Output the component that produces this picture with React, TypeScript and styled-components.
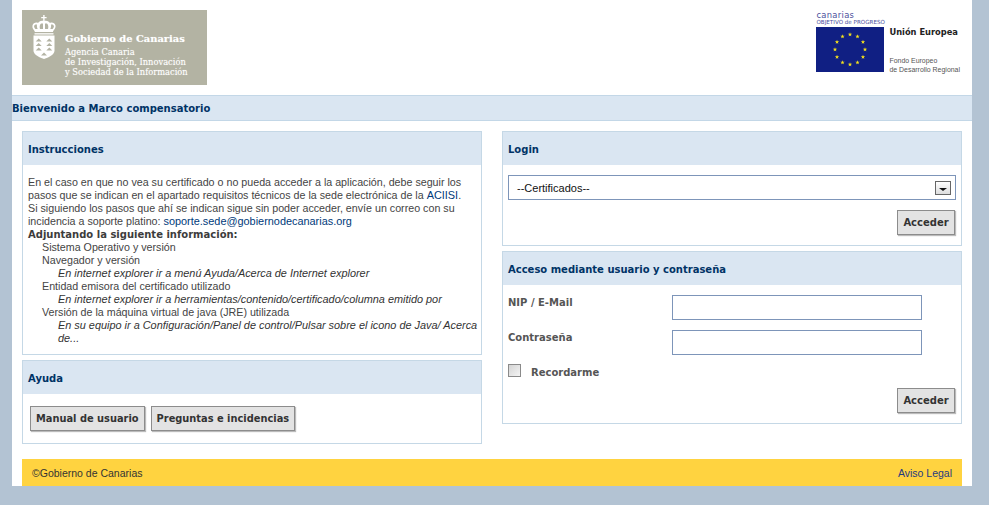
import React from "react";
import styled, { createGlobalStyle } from "styled-components";

const Global = createGlobalStyle`
  html, body { margin: 0; padding: 0; background: #b3c3d3; }
  body { font-family: "Liberation Sans", "DejaVu Sans", sans-serif; font-size: 12px; color: #444; }
`;
const bold = `"DejaVu Sans", "Noto Sans", sans-serif`;
const body = `"Liberation Sans", "DejaVu Sans", sans-serif`;

const Page = styled.div`
  width: 960px; margin-left: 12px; background: #fff; height: 486px;
  display: flex; flex-direction: column; margin-bottom: 19px;
`;
const Header = styled.header`
  height: 95px; display: flex; justify-content: space-between; align-items: flex-start;
  padding: 0 12px 0 10px; box-sizing: border-box;
`;
const LogoBox = styled.div`
  margin-top: 10px; width: 185px; height: 75px; background: #b3b3a3; color: #fff;
  display: flex; gap: 9px; padding: 5px 0 0 10px; box-sizing: border-box;
`;
const LogoText = styled.div`
  font-family: "DejaVu Serif", serif; font-size: 8.3px; line-height: 10px; padding-top: 16px; white-space: nowrap;
  text-shadow: 0 0 1px rgba(255, 255, 255, 0.45);
`;
const LogoTitle = styled.div`font-size: 9.9px; font-weight: bold; line-height: 15px; margin-bottom: 1px;`;
const EuBox = styled.div`
  margin-top: 11px; display: flex; gap: 5px; align-items: flex-start;
`;
const EuLeft = styled.div`width: 68px; display: flex; flex-direction: column;`;
const Canarias = styled.div`font-family: "DejaVu Sans", sans-serif; font-size: 8.4px; line-height: 8px; color: #4a4f9c; letter-spacing: 0.3px;`;
const Objetivo = styled.div`font-family: "DejaVu Sans", sans-serif; font-size: 5.6px; line-height: 7px; color: #4a4f9c; white-space: nowrap; height: 8px;`;
const EuRight = styled.div`padding-top: 16px; white-space: nowrap; color: #333; font-family: "Liberation Sans", sans-serif;`;
const EuTitle = styled.div`font-family: "DejaVu Sans", sans-serif; font-weight: bold; font-size: 8.3px; line-height: 11px; color: #222; margin-bottom: 18px;`;
const EuSub = styled.div`font-size: 6.95px; line-height: 9px; color: #555;`;

const WelcomeBar = styled.div`
  height: 26px; box-sizing: border-box; background: #dae6f2; padding-top: 1px;
  border-top: 1px solid #c3d7e7; border-bottom: 1px solid #c3d7e7;
  font-family: ${bold}; font-weight: bold; font-size: 10px; line-height: 24px; color: #003366;
`;
const Columns = styled.div`
  display: grid; grid-template-columns: 460px 460px; column-gap: 20px; padding: 10px 10px 0;
  height: 338px; box-sizing: border-box;
`;
const Column = styled.div`display: flex; flex-direction: column; gap: 5px;`;
const Panel = styled.section<{ $h: number }>`
  height: ${(p) => p.$h}px; box-sizing: border-box; border: 1px solid #c5d8e6; background: #fff;
`;
const PanelHead = styled.h2`
  margin: 0; height: 33px; box-sizing: border-box; background: #dae6f2; padding: 1px 0 0 5px;
  font-family: ${bold}; font-weight: bold; font-size: 10px; line-height: 33px; color: #003366;
`;
const Instr = styled.div`
  padding: 11px 1px 0 5px; font-family: ${body}; font-size: 10.7px; line-height: 13px; color: #444;
`;
const Mail = styled.a`color: #003a7a; text-decoration: none; font-size: 10.9px;`;
const Strong = styled.div`font-family: ${bold}; font-weight: bold; font-size: 10px; color: #3c3c3c;`;
const Item = styled.div`padding-left: 14px;`;
const Hint = styled.div`padding-left: 30px; font-style: italic; font-size: 10.9px; color: #333;`;

const Btn = styled.button`
  height: 25px; box-sizing: border-box; padding: 0 5px; background: #e3e3e3;
  border: 1px solid #8c8c8c; box-shadow: 1px 1px 1px #bbb; border-radius: 0;
  font-family: ${bold}; font-weight: bold; font-size: 9.85px; color: #333; white-space: nowrap;
`;
const AccessBtn = styled(Btn)`width: 58px; font-size: 10px; padding: 0;`;
const BtnRow = styled.div`display: flex; gap: 6px; padding: 12px 0 0 7px;`;
const EndRow = styled.div<{ $top: number }>`display: flex; justify-content: flex-end; padding: ${(p) => p.$top}px 6px 0 0;`;

const Select = styled.div`
  height: 25px; box-sizing: border-box; margin: 10px 5px 0; border: 1px solid #7d95b9;
  display: flex; align-items: center; justify-content: space-between; padding: 0 4px 0 8px;
  font-family: ${body}; font-size: 11px; color: #111;
`;
const Arrow = styled.span`
  width: 16px; height: 14px; box-sizing: border-box; border: 1px solid #666; background: linear-gradient(#fff, #ddd);
  display: flex; align-items: center; justify-content: center; padding-top: 4px;
`;
const Tri = styled.i`width: 0; height: 0; border: 4px solid transparent; border-top: 3px solid #111; border-bottom: 0;`;

const FormGrid = styled.div`
  display: grid; grid-template-columns: 164px 250px; row-gap: 10px; padding: 10px 0 0 5px;
`;
const Label = styled.label`
  font-family: ${bold}; font-weight: bold; font-size: 10px; line-height: 13px; color: #555; padding-top: 1px;
`;
const CheckLabel = styled(Label)`padding-top: 2px;`;
const Field = styled.input`
  width: 250px; height: 25px; box-sizing: border-box; border: 1px solid #7d95b9; background: #fff; padding: 0; margin: 0; outline: 0;
`;
const CheckRow = styled.div`display: flex; align-items: flex-start; gap: 10px; padding: 9px 0 0 5px;`;
const Check = styled.span`
  width: 13px; height: 13px; box-sizing: border-box; border: 1px solid #8a8a8a;
  background: linear-gradient(135deg, #d4d4d4, #f4f4f4);
`;

const Footer = styled.footer`
  margin: 0 10px; height: 27px; background: #ffd340; display: flex; justify-content: space-between; align-items: center;
  padding: 0 10px; font-family: ${body}; font-size: 10.5px; color: #333;
`;
const Legal = styled.a`color: #1f3a80; text-decoration: none;`;

const Shield = () => (
  <svg width="24" height="44" viewBox="0 0 24 44" fill="#fff">
    <path d="M11.2 0h1.4v2h2v1.3h-2V6h-1.4V3.3h-2V2h2z" />
    <path d="M12 6c3-1 5 .5 6 2 2-1 5 0 5.5 2.6.4 2.3-1 4-2.3 5.400l-.2 1H2.800l-.2-1C1.300 14.500 0 13 .5 10.600 1 8 4 7 6 8c1-1.500 3-3 6-2z" />
    <path d="M5 9.500c-1.600-.3-2.700.3-2.900 1.600-.1 1 .4 2 1.300 3h2.300C5 12.500 4.700 11 5 9.500zM19 9.500c1.600-.3 2.700.3 2.900 1.600.1 1-.4 2-1.300 3h-2.300c.7-1.600 1-3.100.7-4.600zM8.500 9c-1 1.500-1 3.500-.5 5h3V8.600C10 8.500 9 8.600 8.500 9zM15.500 9c1 1.500 1 3.500.5 5h-3V8.600c1-.1 2 0 2.500.4z" fill="#b3b3a3" />
    <path d="M2.500 18.200h19v1.300h-19z" />
    <path d="M1.500 20.500h21v15c0 4-5 6.500-10.500 8.500C6.500 42 1.500 39.500 1.500 35.500z" />
    <path fill="#b3b3a3" d="M6.700 23.500l3 3h-6zM17.300 23.500l3 3h-6zM6.700 28l3 3h-6zM17.300 28l3 3h-6zM6.700 32.500l3 3h-6zM17.300 32.500l3 3h-6zM12 37.500l3 3H9z" />
  </svg>
);

const starAt = [0, 30, 60, 90, 120, 150, 180, 210, 240, 270, 300, 330];
const Flag = () => (
  <svg width="68" height="45" viewBox="0 0 68 45">
    <rect width="68" height="45" fill="#101f83" />
    {starAt.map((a) => {
      const r = (a * Math.PI) / 180;
      const x = 34 + 15 * Math.sin(r);
      const y = 22.5 - 15 * Math.cos(r);
      const pts = Array.from({ length: 10 }, (_, i) => {
        const t = (i * Math.PI) / 5;
        const rr = i % 2 ? 0.9 : 2.3;
        return `${(x + rr * Math.sin(t)).toFixed(2)},${(y - rr * Math.cos(t)).toFixed(2)}`;
      }).join(" ");
      return <polygon key={a} points={pts} fill="#f5e11c" />;
    })}
  </svg>
);

export default function App() {
  return (
    <>
      <Global />
      <Page>
        <Header>
          <LogoBox>
            <Shield />
            <LogoText>
              <LogoTitle>Gobierno de Canarias</LogoTitle>
              <div>Agencia Canaria</div>
              <div>de Investigación, Innovación</div>
              <div>y Sociedad de la Información</div>
            </LogoText>
          </LogoBox>
          <EuBox>
            <EuLeft>
              <Canarias>canarias</Canarias>
              <Objetivo>OBJETIVO de PROGRESO</Objetivo>
              <Flag />
            </EuLeft>
            <EuRight>
              <EuTitle>Unión Europea</EuTitle>
              <EuSub>Fondo Europeo</EuSub>
              <EuSub>de Desarrollo Regional</EuSub>
            </EuRight>
          </EuBox>
        </Header>
        <WelcomeBar>Bienvenido a Marco compensatorio</WelcomeBar>
        <Columns>
          <Column>
            <Panel $h={224}>
              <PanelHead>Instrucciones</PanelHead>
              <Instr>
                En el caso en que no vea su certificado o no pueda acceder a la aplicación, debe seguir los<br />
                pasos que se indican en el apartado requisitos técnicos de la sede electrónica de la <Mail>ACIISI</Mail>.<br />
                Si siguiendo los pasos que ahí se indican sigue sin poder acceder, envíe un correo con su<br />
                incidencia a soporte platino: <Mail>soporte.sede@gobiernodecanarias.org</Mail>
                <Strong>Adjuntando la siguiente información:</Strong>
                <Item>Sistema Operativo y versión</Item>
                <Item>Navegador y versión</Item>
                <Hint>En internet explorer ir a menú Ayuda/Acerca de Internet explorer</Hint>
                <Item>Entidad emisora del certificado utilizado</Item>
                <Hint>En internet explorer ir a herramientas/contenido/certificado/columna emitido por</Hint>
                <Item>Versión de la máquina virtual de java (JRE) utilizada</Item>
                <Hint>En su equipo ir a Configuración/Panel de control/Pulsar sobre el icono de Java/ Acerca de...</Hint>
              </Instr>
            </Panel>
            <Panel $h={84}>
              <PanelHead>Ayuda</PanelHead>
              <BtnRow>
                <Btn>Manual de usuario</Btn>
                <Btn>Preguntas e incidencias</Btn>
              </BtnRow>
            </Panel>
          </Column>
          <Column>
            <Panel $h={115}>
              <PanelHead>Login</PanelHead>
              <Select>
                --Certificados--
                <Arrow><Tri /></Arrow>
              </Select>
              <EndRow $top={10}><AccessBtn>Acceder</AccessBtn></EndRow>
            </Panel>
            <Panel $h={173}>
              <PanelHead>Acceso mediante usuario y contraseña</PanelHead>
              <FormGrid>
                <Label>NIP / E-Mail</Label>
                <Field />
                <Label>Contraseña</Label>
                <Field type="password" />
              </FormGrid>
              <CheckRow>
                <Check />
                <CheckLabel>Recordarme</CheckLabel>
              </CheckRow>
              <EndRow $top={9}><AccessBtn>Acceder</AccessBtn></EndRow>
            </Panel>
          </Column>
        </Columns>
        <Footer>
          <span>©Gobierno de Canarias</span>
          <Legal>Aviso Legal</Legal>
        </Footer>
      </Page>
    </>
  );
}
